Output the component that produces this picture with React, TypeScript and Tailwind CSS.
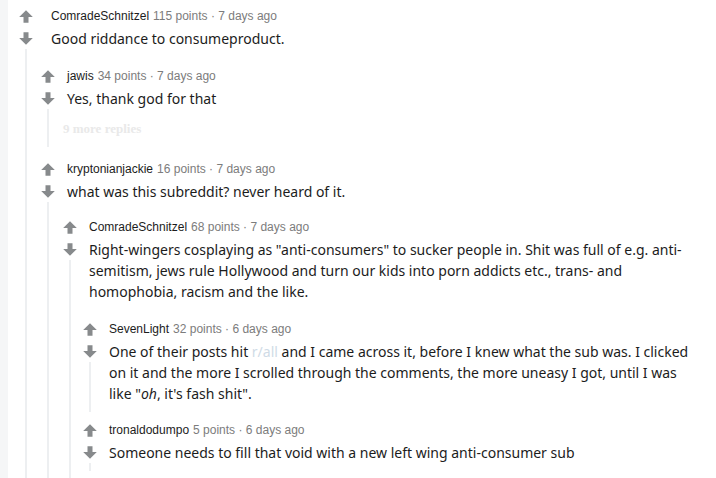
import React from 'react';

interface CommentData {
  id: string;
  author: string;
  points: number;
  age: string;
  body: React.ReactNode;
  moreReplies?: number;
  replies?: CommentData[];
}

const thread: CommentData = {
  id: 'c1',
  author: 'ComradeSchnitzel',
  points: 115,
  age: '7 days ago',
  body: 'Good riddance to consumeproduct.',
  replies: [
    {
      id: 'c2',
      author: 'jawis',
      points: 34,
      age: '7 days ago',
      body: 'Yes, thank god for that',
      moreReplies: 9,
    },
    {
      id: 'c3',
      author: 'kryptonianjackie',
      points: 16,
      age: '7 days ago',
      body: 'what was this subreddit? never heard of it.',
      replies: [
        {
          id: 'c4',
          author: 'ComradeSchnitzel',
          points: 68,
          age: '7 days ago',
          body:
            'Right-wingers cosplaying as "anti-consumers" to sucker people in. Shit was full of e.g. anti-semitism, jews rule Hollywood and turn our kids into porn addicts etc., trans- and homophobia, racism and the like.',
          replies: [
            {
              id: 'c5',
              author: 'SevenLight',
              points: 32,
              age: '6 days ago',
              body: (
                <>
                  One of their posts hit <span className="text-[#cfdbe6]">r/all</span> and I came across it, before I
                  knew what the sub was. I clicked on it and the more I scrolled through the comments, the more uneasy
                  I got, until I was like "<em>oh</em>, it's fash shit".
                </>
              ),
            },
            {
              id: 'c6',
              author: 'tronaldodumpo',
              points: 5,
              age: '6 days ago',
              body: 'Someone needs to fill that void with a new left wing anti-consumer sub',
            },
          ],
        },
      ],
    },
  ],
};

// per-depth spacing, kept as full class names
const contentGap = ['ml-[13px]', 'ml-[7px]', 'ml-[7px]', 'ml-[7px]'];
const childIndent = ['-ml-[15px] mt-[17px] gap-[12px]', '-ml-[9px] mt-[15px] gap-[12px]', '-ml-[11px] mt-[17px] gap-[8px]', ''];

const ArrowUp = () => (
  <svg width="14" height="13" viewBox="0 0 14 13" className="fill-[#878a8c]">
    <path d="M7 0.3 L13.8 7 H9.5 V12.7 H4.5 V7 H0.2 Z" />
  </svg>
);

const ArrowDown = () => (
  <svg width="14" height="13" viewBox="0 0 14 13" className="fill-[#878a8c]">
    <path d="M7 12.7 L13.8 6 H9.5 V0.3 H4.5 V6 H0.2 Z" />
  </svg>
);

const Comment: React.FC<{ c: CommentData; depth: number }> = ({ c, depth }) => (
  <div className="flex">
    <div className="flex w-6 shrink-0 flex-col items-center">
      <div className="flex h-5 items-center">
        <ArrowUp />
      </div>
      <div className="mt-0.5 flex h-[21px] items-center">
        <ArrowDown />
      </div>
      <div className="w-0.5 flex-1 bg-[#edeff1]" />
    </div>
    <div className={`min-w-0 flex-1 pb-2 ${contentGap[depth]}`}>
      <div className="flex h-5 items-center font-['Liberation_Sans',sans-serif] text-xs">
        <span className="text-[#1c1c1c]">{c.author}</span>
        <span className="ml-1 text-[#7c7c7c]">
          {c.points} points · {c.age}
        </span>
      </div>
      <p className="mt-0.5 text-sm leading-[21px] text-[#1c1c1c]">{c.body}</p>
      {c.moreReplies ? (
        <div className="-ml-1 mt-2.5 flex h-5 items-center font-['Liberation_Serif',serif] text-[13px] font-bold text-[#e9e9e9]">
          {c.moreReplies} more replies
        </div>
      ) : null}
      {c.replies ? (
        <div className={`flex flex-col ${childIndent[depth]}`}>
          {c.replies.map(r => (
            <Comment key={r.id} c={r} depth={depth + 1} />
          ))}
        </div>
      ) : null}
    </div>
  </div>
);

export default function App() {
  return (
    <div className="flex h-[478px] w-[716px] overflow-hidden bg-white font-['Noto_Sans',sans-serif]">
      <div className="w-2 shrink-0 bg-[#f5f6f7]" />
      <div className="flex-1 pb-6 pl-1.5 pr-[18px] pt-1.5">
        <Comment c={thread} depth={0} />
      </div>
    </div>
  );
}
